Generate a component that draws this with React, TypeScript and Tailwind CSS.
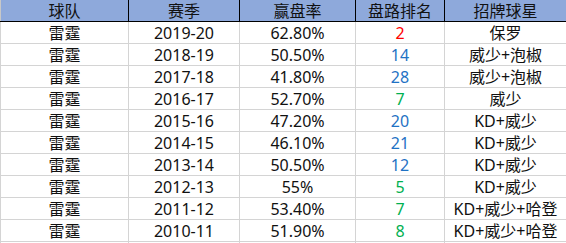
const rows = [
  { team: "雷霆", season: "2019-20", rate: "62.80%", rank: "2", star: "保罗" },
  { team: "雷霆", season: "2018-19", rate: "50.50%", rank: "14", star: "威少+泡椒" },
  { team: "雷霆", season: "2017-18", rate: "41.80%", rank: "28", star: "威少+泡椒" },
  { team: "雷霆", season: "2016-17", rate: "52.70%", rank: "7", star: "威少" },
  { team: "雷霆", season: "2015-16", rate: "47.20%", rank: "20", star: "KD+威少" },
  { team: "雷霆", season: "2014-15", rate: "46.10%", rank: "21", star: "KD+威少" },
  { team: "雷霆", season: "2013-14", rate: "50.50%", rank: "12", star: "KD+威少" },
  { team: "雷霆", season: "2012-13", rate: "55%", rank: "5", star: "KD+威少" },
  { team: "雷霆", season: "2011-12", rate: "53.40%", rank: "7", star: "KD+威少+哈登" },
  { team: "雷霆", season: "2010-11", rate: "51.90%", rank: "8", star: "KD+威少+哈登" },
];

// red for top 3, green for top 10, blue for the rest
function rankColor(rank: string) {
  const n = Number(rank);
  if (n <= 3) return "text-[#ff0000]";
  if (n <= 10) return "text-[#00b050]";
  return "text-[#1f72c4]";
}

const cols = "grid grid-cols-[129px_111px_116px_89px_1fr]";

export default function App() {
  return (
    <div
      className="w-[566px] h-[243px] overflow-hidden bg-white text-[16px] text-[#111]"
      style={{ fontFamily: '"Noto Sans", "Noto Sans CJK SC", sans-serif' }}
    >
      {/* HEADER */}
      <div className={`${cols} h-[22px] bg-[#8ea9db] border-b border-black`}>
        <div className="flex items-center justify-center border-l border-l-[#c8c8c8] border-r border-black leading-none">球队</div>
        <div className="flex items-center justify-center border-r border-black leading-none">赛季</div>
        <div className="flex items-center justify-center border-r border-black leading-none">赢盘率</div>
        <div className="flex items-center justify-center border-r border-black leading-none">盘路排名</div>
        <div className="flex items-center justify-center leading-none">招牌球星</div>
      </div>

      {/* ROWS */}
      {rows.map((r, i) => (
        <div key={i} className={`${cols} h-[22px] border-b border-[#d4d4d4]`}>
          <div className="flex items-center justify-center border-l border-r border-[#d4d4d4] leading-none">{r.team}</div>
          <div className="flex items-center justify-center border-r border-[#d4d4d4] leading-none">{r.season}</div>
          <div className="flex items-center justify-center border-r border-[#d4d4d4] leading-none">{r.rate}</div>
          <div className={`flex items-center justify-center border-r border-[#d4d4d4] leading-none ${rankColor(r.rank)}`}>{r.rank}</div>
          <div className="flex items-center justify-center leading-none">{r.star}</div>
        </div>
      ))}
      <div className={`${cols} h-[22px]`}>
        <div className="border-l border-r border-[#d4d4d4]"></div>
        <div className="border-r border-[#d4d4d4]"></div>
        <div className="border-r border-[#d4d4d4]"></div>
        <div className="border-r border-[#d4d4d4]"></div>
        <div></div>
      </div>
    </div>
  );
}
